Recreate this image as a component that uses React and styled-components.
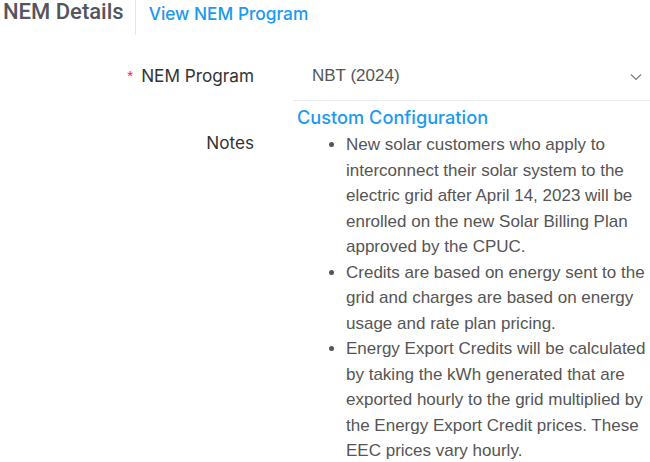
import React from "react";
import styled, { createGlobalStyle } from "styled-components";

const Global = createGlobalStyle`
  html, body { margin: 0; padding: 0; background: #fff; }
  body { font-family: "Liberation Sans", Arial, sans-serif; }
  * { box-sizing: border-box; }
`;

const Page = styled.div`
  width: 650px;
  height: 462px;
  overflow: hidden;
  background: #fff;
`;

const Header = styled.div`
  display: flex;
  align-items: stretch;
  height: 35px;
`;

const Title = styled.div`
  font-family: Roboto, "Noto Sans", sans-serif;
  font-weight: 500;
  font-size: 22px;
  color: #54565e;
  padding: 0 11px 0 3px;
  line-height: 26px;
  margin-top: -1px;
  border-right: 1px solid #e6e6e6;
`;

const HeaderLink = styled.a`
  font-family: Inter, "Open Sans", sans-serif;
  font-weight: 500;
  font-size: 17.3px;
  color: #1a9af0;
  text-decoration: none;
  margin-left: 13px;
  line-height: 28px;
`;

const FormRow = styled.div`
  display: grid;
  grid-template-columns: 254px 1fr;
  column-gap: 39px;
  margin-top: ${(p) => p.$mt || 0}px;
`;

const Label = styled.div`
  text-align: right;
  font-family: Inter, "Noto Sans", sans-serif;
  font-size: 17.2px;
  color: #333;
  padding-top: ${(p) => p.$pt || 0}px;
  display: ${(p) => (p.$center ? "flex" : "block")};
  align-items: center;
  justify-content: flex-end;
  line-height: 20px;
`;

const Required = styled.span`
  color: #f5222d;
  margin-right: 8px;
  font-family: "Liberation Sans", sans-serif;
  font-size: 15px;
`;

const Select = styled.div`
  height: 50px;
  display: flex;
  align-items: center;
  justify-content: space-between;
  padding: 0 8px 0 19px;
  border-bottom: 1px solid #ececf0;
  font-family: "Liberation Sans", Arial, sans-serif;
  font-size: 17px;
  color: #555;
`;

const ChevronBox = styled.span`
  display: flex;
  margin-top: 3px;
`;

const Content = styled.div`
  padding-left: 4px;
`;

const SectionTitle = styled.div`
  font-family: Inter, "Open Sans", sans-serif;
  font-weight: 500;
  font-size: 18.2px;
  line-height: 24px;
  color: #1a9af0;
  margin-top: 4px;
`;

const Notes = styled.ul`
  margin: 3px 0 0;
  padding: 0 0 0 49px;
  font-family: "Liberation Sans", Arial, sans-serif;
  font-size: 17px;
  line-height: 25.5px;
  color: #555;
`;

const Chevron = () => (
  <svg width="12" height="8" viewBox="0 0 12 8" fill="none">
    <path d="M1 1.5 L6 6.5 L11 1.5" stroke="#777" strokeWidth="1.1" />
  </svg>
);

export default function App() {
  return (
    <Page>
      <Global />
      <Header>
        <Title>NEM Details</Title>
        <HeaderLink href="#">View NEM Program</HeaderLink>
      </Header>
      <FormRow $mt={16}>
        <Label $center>
          <Required>*</Required>NEM Program
        </Label>
        <Select>
          <span>NBT (2024)</span>
          <ChevronBox>
            <Chevron />
          </ChevronBox>
        </Select>
      </FormRow>
      <FormRow>
        <Label $pt={32}>Notes</Label>
        <Content>
          <SectionTitle>Custom Configuration</SectionTitle>
          <Notes>
            <li>
              New solar customers who apply to interconnect their solar system
              to the electric grid after April 14, 2023 will be enrolled on the
              new Solar Billing Plan approved by the CPUC.
            </li>
            <li>
              Credits are based on energy sent to the grid and charges are based
              on energy usage and rate plan pricing.
            </li>
            <li>
              Energy Export Credits will be calculated by taking the kWh
              generated that are exported hourly to the grid multiplied by the
              Energy Export Credit prices. These EEC prices vary hourly.
            </li>
          </Notes>
        </Content>
      </FormRow>
    </Page>
  );
}
